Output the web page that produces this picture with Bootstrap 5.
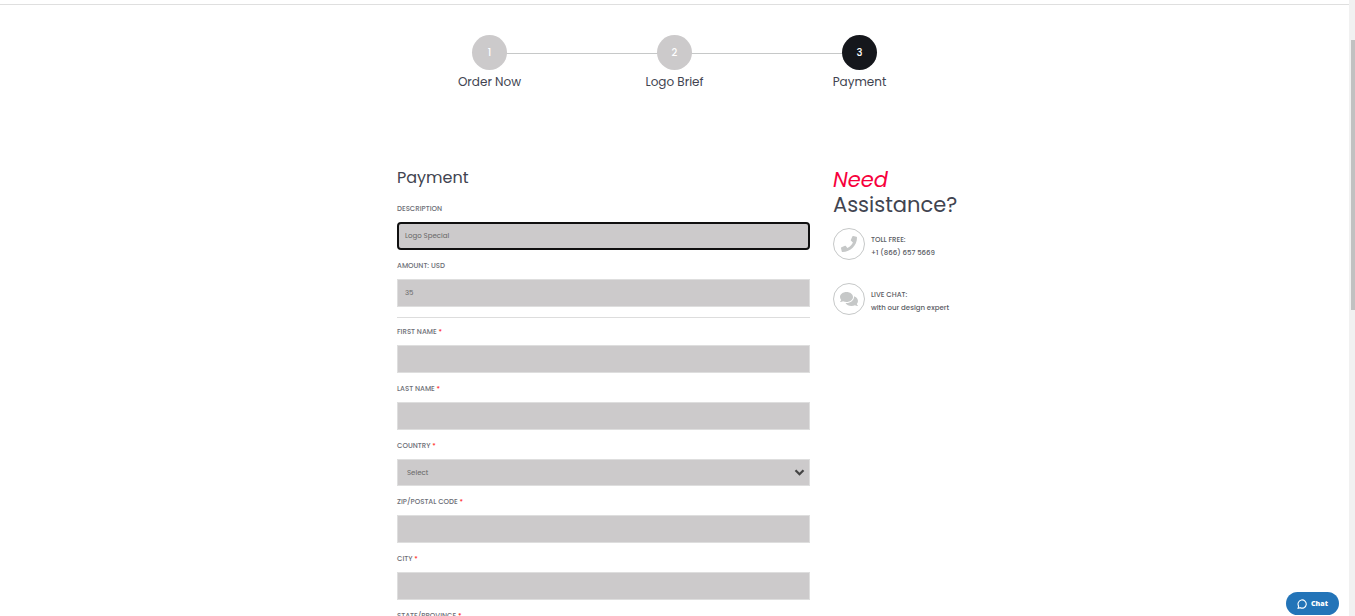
<!DOCTYPE html>
<html lang="en">
<head>
<meta charset="utf-8">
<meta name="viewport" content="width=device-width, initial-scale=1">
<title>Payment</title>
<link href="https://cdn.jsdelivr.net/npm/bootstrap@5.3.0/dist/css/bootstrap.min.css" rel="stylesheet">
<script src="https://cdn.jsdelivr.net/npm/bootstrap@5.3.0/dist/js/bootstrap.bundle.min.js" defer></script>
<style>
  body { font-family: Poppins, Inter, sans-serif; color: #414450; font-size: 7px; }
  .viewport { height: 100vh; }
  .page-body { margin-right: 6px; }
  .page-top { height: 5px; border-bottom: 1px solid #dfdfdf; }
  .page-width { max-width: 555px; }
  .steps { margin-top: 30px; }
  .step { position: relative; font-size: 12px; line-height: 18px; }
  .step + .step::before { content: ""; position: absolute; top: 18px; right: 50%; width: 100%; height: 1px; background: #c6c8c8; }
  .step-dot { position: relative; z-index: 1; width: 35px; height: 35px; margin-bottom: 3px; background: #cccacb; color: #fff; font-size: 10px; font-weight: 500; }
  .active .step-dot { background: #15171c; }
  .checkout { margin-top: 75px; gap: 23px; }
  .form-title { font-size: 16px; line-height: 24px; margin-bottom: 12px; font-weight: 400; }
  .field { margin-bottom: 9px; }
  .field label { display: block; font-size: 7px; line-height: 14px; margin-bottom: 6px; color: #6c6e76; text-transform: uppercase; font-weight: 500; }
  .field label span { color: #f33; }
  .field .form-control, .field .form-select { height: 28px; padding: 0 7px; font-size: 7px; line-height: 12px; color: #666; background-color: #cccacb; border: 1px solid #dedede; border-radius: 0; box-shadow: none; }
  .field .form-control.current { border: 2px solid #101010; border-radius: 4px; padding: 0 6px; }
  .field .form-select { height: 27px; padding-left: 9px; background-size: 11px 11px; background-position: right 4px center; background-image: url("data:image/svg+xml,%3Csvg xmlns='http://www.w3.org/2000/svg' viewBox='0 0 11 11'%3E%3Cpath d='M1.5 3.2l4 4 4-4' fill='none' stroke='%23444' stroke-width='2.2'/%3E%3C/svg%3E"); }
  .divider { margin: 10px 0 7px; border-top: 1px solid #ddd; opacity: 1; }
  .help { width: 119px; }
  .help-title { font-size: 21px; line-height: 25px; margin: 0 0 11px; font-weight: 400; padding-top: 1px; }
  .help-title em { display: block; color: #f7003c; }
  .contact { gap: 6px; margin-bottom: 23px; line-height: 13px; font-weight: 500; color: #5a5c64; }
  .contact-icon { width: 32px; height: 32px; border: 1px solid #c6c8c8; color: #c6c8c8; }
  .contact-text { padding-top: 3px; }
  .chat-button { position: fixed; right: 16px; bottom: 1px; width: 53px; height: 23px; gap: 4px; background: #2374b8; color: #fff; font: 800 7px "Open Sans", sans-serif; }
  .scroll-track { position: fixed; top: 0; right: 0; bottom: 0; width: 6px; background: #f1f1f1; padding: 40px 0 0 2px; }
  .scroll-thumb { height: 270px; background: #c1c1c1; }
</style>
</head>
<body>
<div class="viewport overflow-hidden">
  <div class="page-body">
    <div class="page-top"></div>
    <main class="page-width mx-auto">
      <ol class="steps row g-0 list-unstyled text-center mb-0">
        <li class="step col"><div class="step-dot rounded-circle d-flex align-items-center justify-content-center mx-auto">1</div>Order Now</li>
        <li class="step col"><div class="step-dot rounded-circle d-flex align-items-center justify-content-center mx-auto">2</div>Logo Brief</li>
        <li class="step col active"><div class="step-dot rounded-circle d-flex align-items-center justify-content-center mx-auto">3</div>Payment</li>
      </ol>
      <div class="checkout d-flex align-items-start">
        <form class="flex-grow-1">
          <h1 class="form-title">Payment</h1>
          <div class="field"><label for="description">Description</label><input class="form-control current" id="description" value="Logo Special"></div>
          <div class="field"><label for="amount">Amount: USD</label><input class="form-control" id="amount" value="35"></div>
          <hr class="divider">
          <div class="field"><label for="first">First Name <span>*</span></label><input class="form-control" id="first"></div>
          <div class="field"><label for="last">Last Name <span>*</span></label><input class="form-control" id="last"></div>
          <div class="field"><label for="country">Country <span>*</span></label><select class="form-select" id="country"><option>Select</option></select></div>
          <div class="field"><label for="zip">Zip/Postal Code <span>*</span></label><input class="form-control" id="zip"></div>
          <div class="field"><label for="city">City <span>*</span></label><input class="form-control" id="city"></div>
          <div class="field"><label for="state">State/Province <span>*</span></label><input class="form-control" id="state"></div>
        </form>
        <aside class="help flex-shrink-0 text-nowrap">
          <h2 class="help-title"><em>Need</em>Assistance?</h2>
          <div class="contact d-flex align-items-center">
            <span class="contact-icon rounded-circle d-flex align-items-center justify-content-center flex-shrink-0"><svg width="16" height="16" viewBox="0 0 512 512" fill="currentColor" aria-hidden="true"><path d="M493.4 24.6l-104-24c-11.3-2.6-22.9 3.3-27.5 13.9l-48 112c-4.2 9.8-1.4 21.3 6.9 28l60.6 49.6c-36 76.7-98.9 140.5-177.2 177.2l-49.6-60.6c-6.8-8.3-18.2-11.1-28-6.9l-112 48C3.9 366.5-2 378.1.6 389.4l24 104C27.1 504.2 36.7 512 48 512c256.1 0 464-207.5 464-464 0-11.2-7.7-20.9-18.6-23.4z"/></svg></span>
            <div class="contact-text">TOLL FREE:<br>+1 (866) 657 5669</div>
          </div>
          <div class="contact d-flex align-items-center">
            <span class="contact-icon rounded-circle d-flex align-items-center justify-content-center flex-shrink-0"><svg width="18" height="16" viewBox="0 0 576 512" fill="currentColor" aria-hidden="true"><path d="M416 192c0-88.4-93.1-160-208-160S0 103.600 0 192c0 34.300 14.100 65.900 38 92-13.400 30.200-35.500 54.200-35.800 54.500-2.200 2.300-2.800 5.700-1.500 8.700S4.800 352 8 352c36.600 0 66.900-12.300 88.700-25 32.200 15.700 70.300 25 111.300 25 114.900 0 208-71.600 208-160zm122 220c23.900-26 38-57.700 38-92 0-66.900-53.500-124.200-129.300-148.100.9 6.600 1.300 13.300 1.300 20.100 0 105.900-107.700 192-240 192-10.800 0-21.300-.8-31.700-1.900C207.800 439.600 281.800 480 368 480c41 0 79.100-9.200 111.300-25 21.800 12.700 52.100 25 88.700 25 3.200 0 6.100-1.900 7.300-4.800 1.300-2.900.7-6.300-1.500-8.700-.3-.3-22.400-24.200-35.800-54.500z"/></svg></span>
            <div class="contact-text">LIVE CHAT:<br>with our design expert</div>
          </div>
        </aside>
      </div>
    </main>
  </div>
</div>
<button type="button" class="chat-button btn rounded-pill border-0 p-0 d-flex align-items-center justify-content-center">
  <svg width="10" height="10" viewBox="0 0 10 10" fill="none" stroke="currentColor" stroke-width="1.1" aria-hidden="true"><path d="M1.100 9.300l.5-2.200A4.100 4.100 0 1 1 3.300 8.700z"/></svg>Chat
</button>
<div class="scroll-track" aria-hidden="true"><div class="scroll-thumb"></div></div>
</body>
</html>
